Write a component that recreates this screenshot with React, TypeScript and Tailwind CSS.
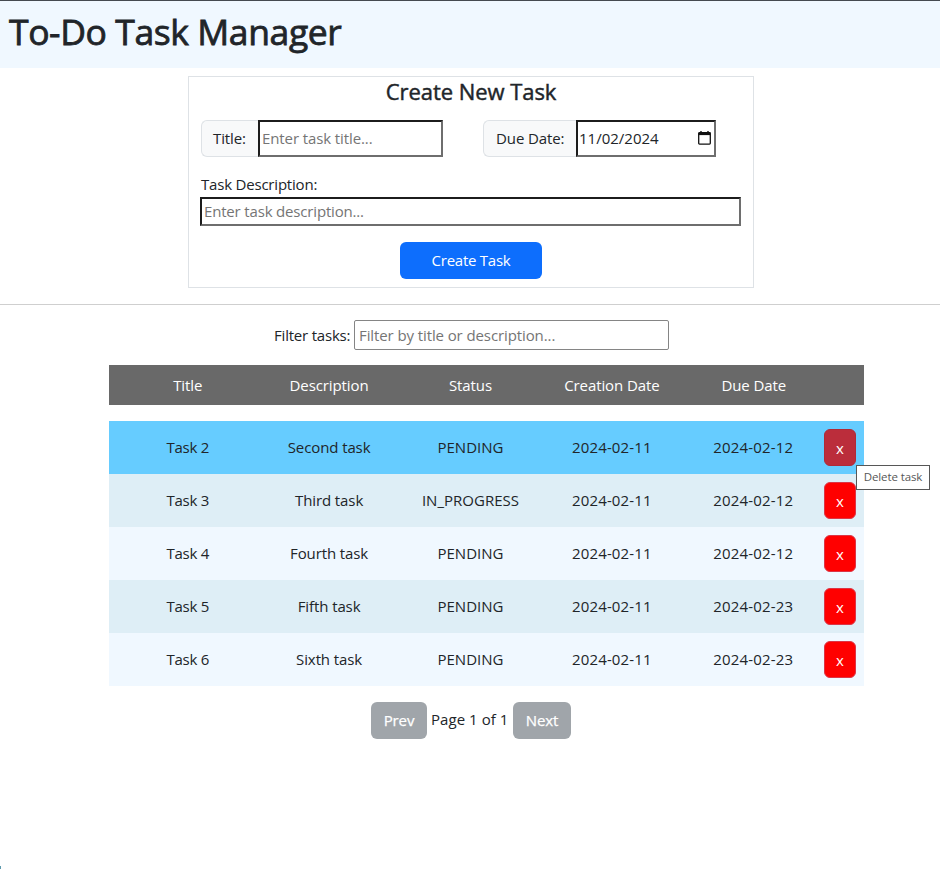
const tasks = [
  { title: 'Task 2', description: 'Second task', status: 'PENDING', created: '2024-02-11', due: '2024-02-12' },
  { title: 'Task 3', description: 'Third task', status: 'IN_PROGRESS', created: '2024-02-11', due: '2024-02-12' },
  { title: 'Task 4', description: 'Fourth task', status: 'PENDING', created: '2024-02-11', due: '2024-02-12' },
  { title: 'Task 5', description: 'Fifth task', status: 'PENDING', created: '2024-02-11', due: '2024-02-23' },
  { title: 'Task 6', description: 'Sixth task', status: 'PENDING', created: '2024-02-11', due: '2024-02-23' },
];

const insetBorder = 'border-2 border-t-[#1c1c1c] border-l-[#1c1c1c] border-b-[#6e6e6e] border-r-[#6e6e6e] bg-white outline-none';
const columns = 'grid grid-cols-[repeat(5,141.4px)_32px] pl-2';

function CalendarIcon() {
  return (
    <svg width="13" height="14" viewBox="0 0 13 14" className="shrink-0">
      <path d="M3 0v2M10 0v2" stroke="#111" strokeWidth="1.4" fill="none" />
      <rect x="0.7" y="1.7" width="11.6" height="11.4" rx="0.8" stroke="#111" strokeWidth="1.3" fill="none" />
      <path d="M0.5 1.5h12v2.6h-12z" fill="#111" />
    </svg>
  );
}

function CreateTaskForm() {
  return (
    <section className="mt-2 ml-[188px] h-[212px] w-[566px] border border-[#dee2e6] px-[11px]">
      <h2 className="text-center text-[22px] leading-[28px] font-medium tracking-[-0.05px] [-webkit-text-stroke:0.45px_#212529]">
        Create New Task
      </h2>
      <div className="mt-[15px] flex h-[37px] pl-px">
        <label className="flex w-[57px] items-center rounded-l-md border border-r-0 border-[#dee2e6] bg-[#f8f9fa] pb-px pl-[11px]">Title:</label>
        <input className={`w-[185px] px-[2px] pb-px placeholder:text-[#757575] ${insetBorder}`} placeholder="Enter task title..." />
        <label className="ml-10 flex w-[93px] items-center rounded-l-md border border-r-0 border-[#dee2e6] bg-[#f8f9fa] pb-px pl-3">Due Date:</label>
        <div className={`flex w-[140px] items-center justify-between pr-[3px] pb-px pl-px text-[#212529] ${insetBorder}`}>
          <span className="tracking-normal">11/02/2024</span>
          <CalendarIcon />
        </div>
      </div>
      <label className="mt-[15px] block pl-px leading-6 tracking-[-0.2px]">Task Description:</label>
      <input
        className={`mt-px block h-[29px] w-[541px] px-[2px] pb-px tracking-[-0.17px] placeholder:text-[#757575] ${insetBorder}`}
        placeholder="Enter task description..."
      />
      <button className="mx-auto mt-4 block h-[37px] w-[142px] rounded-md bg-[#0d6efd] pb-px tracking-[-0.25px] text-white">Create Task</button>
    </section>
  );
}

function TaskTable() {
  return (
    <section className="relative mt-[15px] ml-[109px] w-[755px] text-center">
      <div className={`h-[40px] items-center bg-[#696969] text-white ${columns}`}>
        <span>Title</span>
        <span>Description</span>
        <span>Status</span>
        <span>Creation Date</span>
        <span className="pl-px">Due Date</span>
      </div>
      <div className="mt-4">
        {tasks.map((task, i) => (
          <div
            key={task.title}
            className={`h-[53px] items-center ${columns} ${i === 0 ? 'bg-[#66ccff]' : i % 2 ? 'bg-[#deeef6]' : 'bg-[#f0f8ff]'}`}
          >
            <span className="tracking-[-0.25px]">{task.title}</span>
            <span>{task.description}</span>
            <span className="tracking-[0.02px]">{task.status}</span>
            <span className="tracking-[0.15px]">{task.created}</span>
            <span className="tracking-[0.15px]">{task.due}</span>
            <button
              className={`h-[37px] w-8 rounded-md border pt-px text-white ${i === 0 ? 'border-[#b02a37] bg-[#bb2d3b]' : 'border-[#dc3545] bg-[#ff0000]'}`}
            >
              x
            </button>
          </div>
        ))}
      </div>
      <div className="absolute top-[100px] left-[747px] flex h-[25px] w-[74px] items-center justify-center border border-[#575757] bg-white text-[11.5px] whitespace-nowrap text-[#575757]">
        Delete task
      </div>
    </section>
  );
}

export default function App() {
  return (
    <main className="relative h-[869px] w-[940px] overflow-hidden bg-white font-['Open_Sans',sans-serif] text-[15px] leading-6 tracking-[-0.1px] text-[#212529]">
      <header className="h-[68px] border-t border-[#454a50] bg-[#f0f8ff] pl-[9px]">
        <h1 className="text-[35.5px] leading-[61px] font-medium tracking-[-0.4px] whitespace-nowrap [-webkit-text-stroke:0.8px_#212529]">
          To-Do Task Manager
        </h1>
      </header>
      <CreateTaskForm />
      <hr className="mt-[15.5px] border-[#cfcfcf]" />
      <div className="mt-[15px] flex h-[30px] items-center pl-[274px]">
        <label className="w-[80px] tracking-[-0.2px] whitespace-nowrap">Filter tasks:</label>
        <input
          className="h-[30px] w-[315px] rounded-[2px] border border-[#858585] px-1 outline-none placeholder:text-[#757575]"
          placeholder="Filter by title or description..."
        />
      </div>
      <TaskTable />
      <nav className="mt-4 flex h-[37px] pl-[371px]">
        <button className="w-14 rounded-md bg-[#a0a5aa] text-white [-webkit-text-stroke:0.25px_white]">Prev</button>
        <span className="w-[86px] pt-[5px] pl-1 tracking-[0.05px] whitespace-nowrap">Page 1 of 1</span>
        <button className="w-[58px] rounded-md bg-[#a0a5aa] text-white [-webkit-text-stroke:0.25px_white]">Next</button>
      </nav>
      <span className="absolute bottom-0 left-0 h-[3px] w-px bg-[#5e9aae]" />
    </main>
  );
}
